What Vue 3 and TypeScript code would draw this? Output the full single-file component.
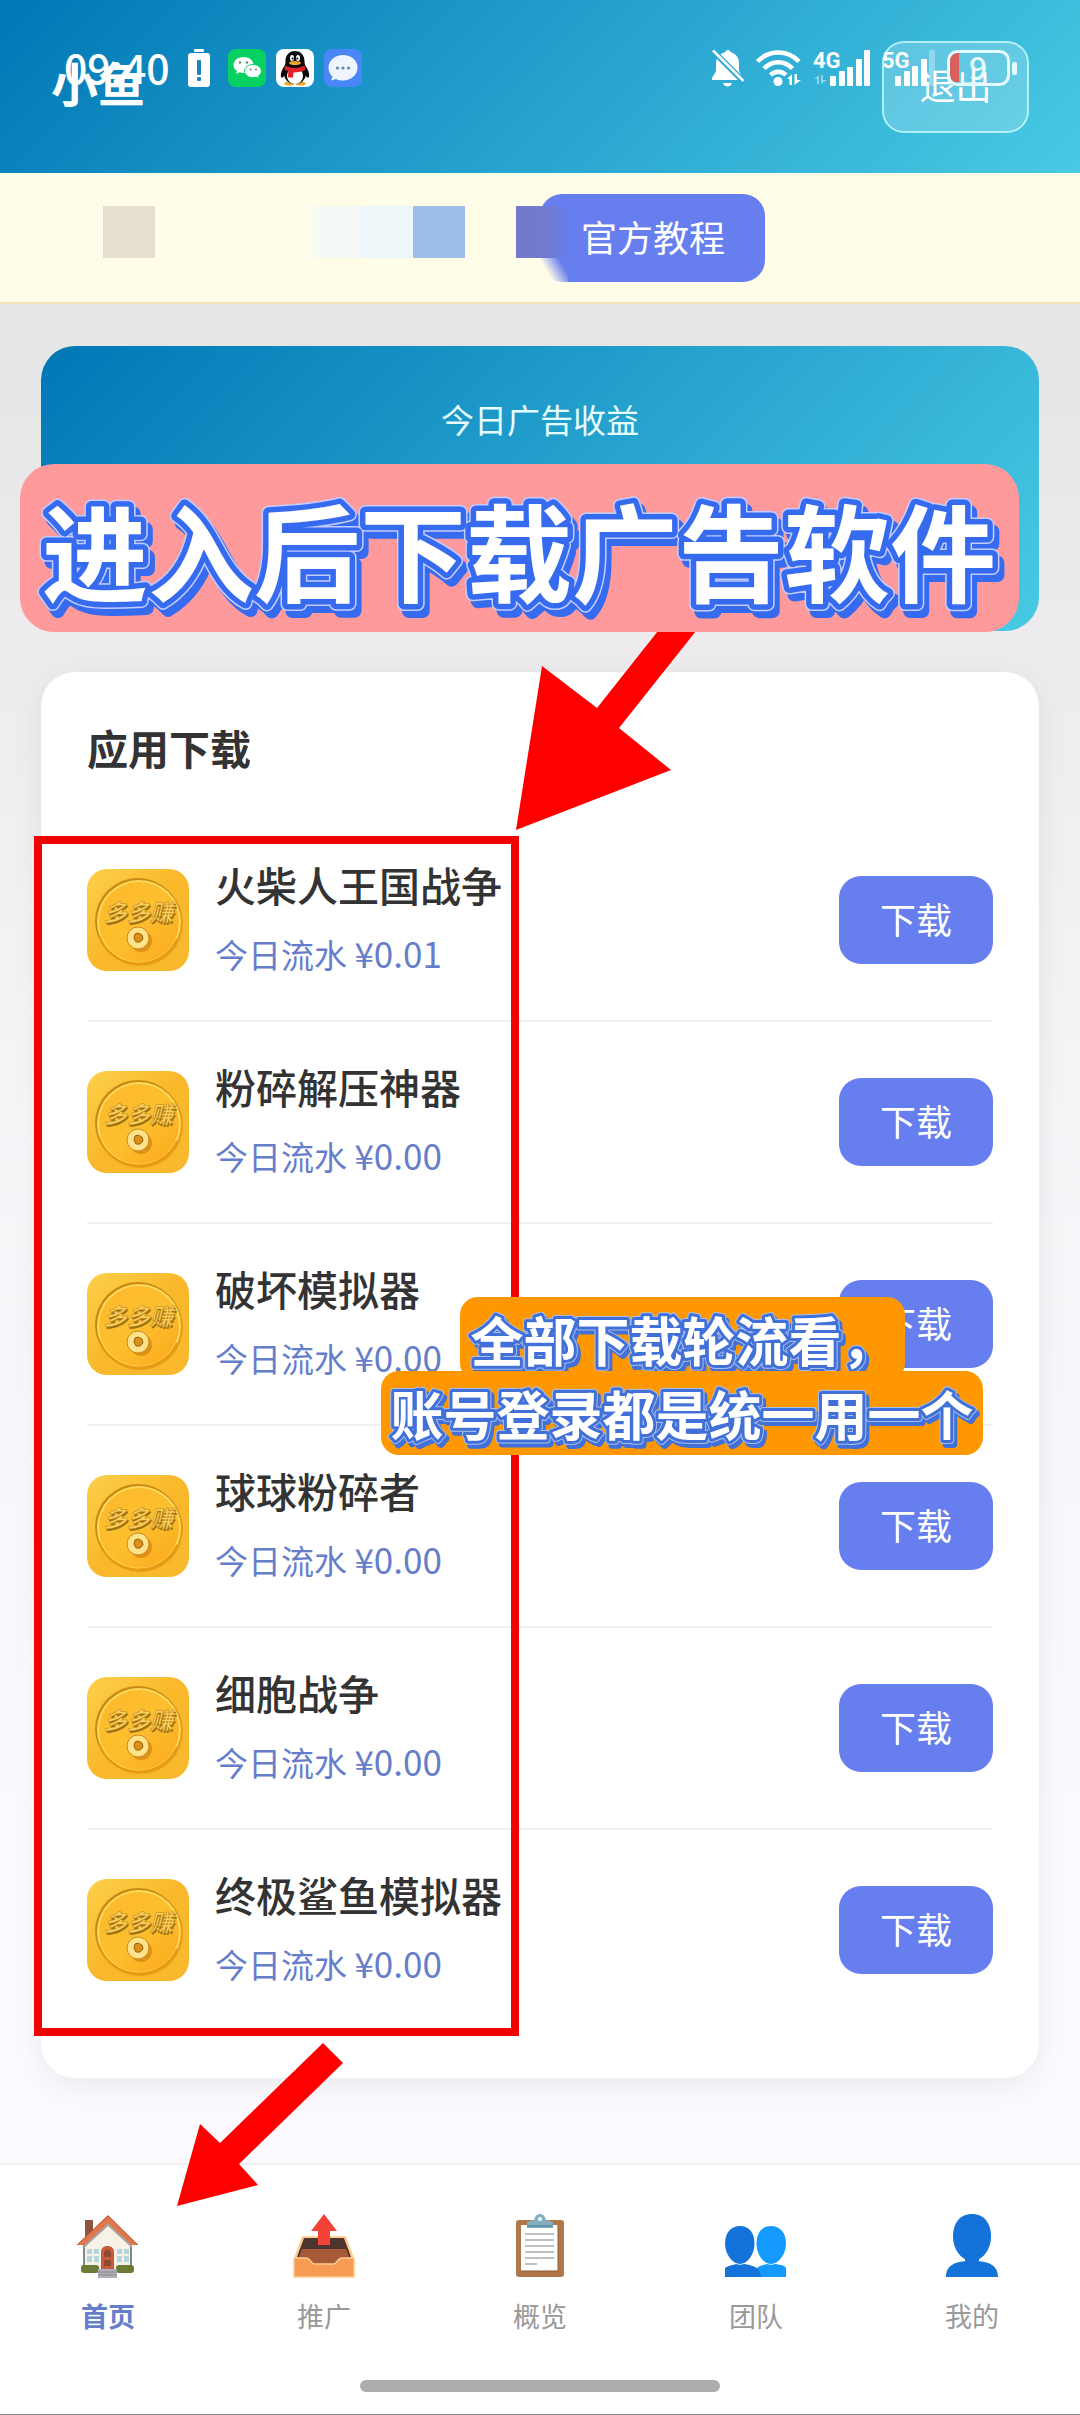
<script setup lang="ts">
import { ref } from 'vue'

interface AppEntry {
  name: string
  income: string
}

interface Tab {
  id: string
  label: string
}

interface Tip {
  id: string
  text: string
  width: number
}

const apps: AppEntry[] = [
  { name: '火柴人王国战争', income: '0.01' },
  { name: '粉碎解压神器', income: '0.00' },
  { name: '破坏模拟器', income: '0.00' },
  { name: '球球粉碎者', income: '0.00' },
  { name: '细胞战争', income: '0.00' },
  { name: '终极鲨鱼模拟器', income: '0.00' },
]

const tabs: Tab[] = [
  { id: 'home', label: '首页' },
  { id: 'promote', label: '推广' },
  { id: 'overview', label: '概览' },
  { id: 'team', label: '团队' },
  { id: 'me', label: '我的' },
]

const activeTab = ref('home')

const mosaic = ['', '', 'sand', '', '', '', 'mist', 'ice', 'sky', '', 'iris']

const tips: Tip[] = [
  { id: 'tip-rotate', text: '全部下载轮流看，', width: 445 },
  { id: 'tip-account', text: '账号登录都是统一用一个', width: 602 },
]
</script>

<template>
  <div class="page">
    <header class="topbar">
      <h1 class="brand">小鱼</h1>
      <button class="logout" type="button">退出</button>

      <div class="status">
        <div class="status-left">
          <span class="clock">09:40</span>
          <svg class="battery-alert" viewBox="0 0 24 38" width="24" height="38">
            <rect x="7" y="0" width="10" height="3" rx="1" fill="#fff" />
            <rect x="1" y="4" width="22" height="34" rx="3" fill="#fff" />
            <rect x="10" y="11" width="4" height="15" rx="1" fill="#2080b8" />
            <rect x="10" y="28" width="4" height="4" rx="1" fill="#2080b8" />
          </svg>
          <svg viewBox="0 0 38 38" width="38" height="38">
            <rect width="38" height="38" rx="8" fill="#07d160" />
            <path d="M15.500 8C9.700 8 5.500 11.600 5.500 16c0 2.500 1.300 4.600 3.400 6.100L8.200 25l3.300-1.700c1.300.4 2.600.6 4 .6 5.800 0 10-3.500 10-7.900S21.300 8 15.500 8z" fill="#fff" />
            <path d="M25 15.500c-4.700 0-8.400 2.900-8.400 6.600s3.700 6.600 8.400 6.600c1.100 0 2.200-.2 3.200-.5l2.700 1.500-.7-2.500c2-1.200 3.200-3 3.200-5.100 0-3.700-3.700-6.600-8.400-6.600z" fill="#fff" stroke="#07d160" stroke-width="1" />
            <g fill="#5a8f72"><circle cx="12" cy="13.500" r="1.200" /><circle cx="19" cy="13.500" r="1.200" /><circle cx="22.500" cy="20.500" r="1" /><circle cx="28" cy="20.500" r="1" /></g>
          </svg>
          <svg viewBox="0 0 38 38" width="38" height="38">
            <rect width="38" height="38" rx="8" fill="#fff" />
            <ellipse cx="13.500" cy="34.500" rx="5" ry="2" fill="#f5a623" />
            <ellipse cx="24.500" cy="34.500" rx="5" ry="2" fill="#f5a623" />
            <path d="M19 2c-6 0-9.500 4.500-9.500 10 0 2-.2 3.200-1.200 5.300C6 20.500 4.200 24.500 5 28c.6 1.500 2.500 0 3.200-1.300C9.500 32 14 35 19 35s9.500-3 10.800-8.300C30.500 28 32.400 29.500 33 28c.8-3.500-1-7.500-3.300-10.700-1-2.100-1.200-3.300-1.200-5.300C28.500 6.500 25 2 19 2z" fill="#0b0b0b" />
            <ellipse cx="19" cy="27" rx="8" ry="8" fill="#fff" />
            <ellipse cx="16" cy="9" rx="2" ry="3" fill="#fff" />
            <ellipse cx="22" cy="9" rx="2" ry="3" fill="#fff" />
            <circle cx="16.600" cy="9.500" r="1" /><circle cx="21.400" cy="9.500" r="1" />
            <ellipse cx="19" cy="14" rx="6" ry="2" fill="#f5a623" />
            <path d="M9.500 16.500c5.500 3.200 13.500 3.200 19 0l1 4.300c-3.500 2-7.500 2.700-12 2.700l-.5 5h-5l.3-6.500c-1.500-.4-2.700-1-3.800-1.600z" fill="#e3202c" />
          </svg>
          <svg viewBox="0 0 38 38" width="38" height="38">
            <rect width="38" height="38" rx="8" fill="#4a86f5" />
            <path d="M19 6C11 6 4.500 11.500 4.500 18.500c0 4 1.500 7 4 9.300L7 31.500l5-1.500c2 1 4.500 1.500 7 1.500 8 0 14.500-5.500 14.500-13S27 6 19 6z" fill="#eef5ff" />
            <g fill="#6d86a8"><circle cx="13.500" cy="19" r="1.600" /><circle cx="19" cy="19" r="1.600" /><circle cx="24.500" cy="19" r="1.600" /></g>
          </svg>
        </div>

        <div class="status-right">
          <svg viewBox="0 0 34 38" width="34" height="38">
            <path d="M17 1c1.600 0 2.600 1 2.600 2.300 5.200 1.300 8.400 5.300 8.400 10.700v7c0 3 4 6.500 4 8.500V31H1v-1.500C1 27.500 5 24 5 21v-7C5 8.600 9 4.600 14.400 3.300 14.400 2 15.400 1 17 1z" fill="#fff" />
            <path d="M12 34h9c-.6 2-2.200 3.500-4.500 3.500S12.600 36 12 34z" fill="#fff" />
            <path d="M0 0l34 34" stroke="#2ba8d6" stroke-width="6" />
            <path d="M2 1.500L32.500 32" stroke="#fff" stroke-width="2.500" />
          </svg>
          <svg viewBox="0 0 46 38" width="46" height="38">
            <g fill="none" stroke="#fff" stroke-width="4.500">
              <path d="M1.500 12.500c11.500-12 30-12 41.500 0" />
              <path d="M8 19.500c8-8.500 20.500-8.500 28.500 0" />
              <path d="M14.500 26c4.500-4.500 11-4.500 15.500 0" />
            </g>
            <circle cx="22" cy="32.500" r="4.500" fill="#fff" />
            <path d="M36 25v11h-2.500v-6H31zM38.500 36V25H41v6h4z" fill="#fff" />
          </svg>
          <svg viewBox="0 0 58 38" width="58" height="38">
            <text class="net" x="0" y="19">4G</text>
            <path d="M6 26v9H4v-5H1zM8 35v-9h2v5h4z" fill="#8fd3ee" />
            <g fill="#fff">
              <rect x="17" y="27" width="6" height="10" rx="1" />
              <rect x="26" y="22" width="6" height="15" rx="1" />
              <rect x="34" y="18" width="6" height="19" rx="1" />
              <rect x="43" y="10" width="6" height="27" rx="1" />
              <rect x="51" y="1" width="6" height="36" rx="1" />
            </g>
          </svg>
          <svg viewBox="0 0 54 38" width="54" height="38">
            <text class="net" x="0" y="19">5G</text>
            <g fill="#fff">
              <rect x="13" y="27" width="6" height="10" rx="1" />
              <rect x="22" y="22" width="6" height="15" rx="1" />
              <rect x="30" y="17" width="6" height="20" rx="1" />
              <rect x="39" y="10" width="6" height="27" rx="1" />
              <rect x="47" y="1" width="6" height="36" rx="1" opacity="0.3" />
            </g>
          </svg>
          <svg viewBox="0 0 70 38" width="70" height="38">
            <path d="M12 4h-2C5.500 4 3 6.500 3 11v15c0 4.500 2.500 7 7 7h2z" fill="#d9605e" />
            <rect x="1.500" y="2.500" width="60" height="33" rx="9" fill="none" stroke="#e6fbff" stroke-width="3" />
            <rect x="65" y="13" width="5" height="13" rx="2" fill="#e6fbff" />
            <text class="level" x="22" y="31">9</text>
          </svg>
        </div>
      </div>
    </header>

    <section class="notice">
      <div class="mosaic" aria-hidden="true">
        <span v-for="(tone, i) in mosaic" :key="i" class="cell" :class="tone"></span>
      </div>
      <button class="tutorial" type="button">官方教程</button>
    </section>

    <main class="content">
      <section class="income-card">
        <p class="income-label">今日广告收益</p>
      </section>

      <section class="downloads">
        <h2 class="downloads-title">应用下载</h2>
        <ul class="app-list">
          <li v-for="app in apps" :key="app.name" class="app-row">
            <svg class="coin" viewBox="0 0 102 102" width="102" height="102">
              <rect width="102" height="102" rx="20" fill="url(#coin-bg)" />
              <circle cx="53" cy="54" r="43" fill="#dc920f" opacity="0.7" />
              <circle cx="51" cy="52" r="43" fill="#c98a14" />
              <circle cx="52" cy="53" r="42" fill="#ffd95a" />
              <circle cx="52" cy="53" r="40" fill="url(#coin-face)" />
              <path d="M12 66a42 42 0 0 0 78 4" fill="none" stroke="#e99a12" stroke-width="2" />
              <text class="coin-text shade" x="18" y="54">多多赚</text>
              <text class="coin-text" x="17" y="52">多多赚</text>
              <circle cx="54" cy="72" r="11" fill="#c9780c" opacity="0.6" />
              <circle cx="51" cy="69" r="11" fill="#ffe28a" stroke="#c98a1c" stroke-width="1" />
              <path d="M51 64l4 2 1 4-3 3h-4l-2-4 1-4z" fill="#dc9018" stroke="#94600c" stroke-width="1" />
            </svg>
            <div class="app-info">
              <h3 class="app-name">{{ app.name }}</h3>
              <p class="app-income">今日流水 <span class="amount">¥{{ app.income }}</span></p>
            </div>
            <button class="download" type="button">下载</button>
          </li>
        </ul>
      </section>
    </main>

    <nav class="tabbar">
      <div class="tabs">
        <a
          v-for="tab in tabs"
          :key="tab.id"
          href="#"
          class="tab"
          :class="{ active: tab.id === activeTab }"
          @click.prevent="activeTab = tab.id"
        >
          <svg v-if="tab.id === 'home'" viewBox="0 0 64 64" width="64" height="64">
            <rect x="9" y="6" width="8" height="20" fill="#8d5540" />
            <path d="M8 30L32 8l24 22v28H8z" fill="#f7f1e6" />
            <path d="M8 31v25M55 31v25" stroke="#5c6360" stroke-width="1.500" />
            <path d="M8 34L32 12l24 22v-6L32 5 8 28z" fill="#a9a299" />
            <path d="M32 1L1 31h7L32 9l24 22h6z" fill="#e0764a" />
            <path d="M1 31L32 2l30 29" fill="none" stroke="#b85c3c" stroke-width="1" />
            <g fill="#b4d6dc"><path d="M11 35h5v5h-5zM18 35h5v5h-5zM11 42h5v6h-5zM18 42h5v6h-5zM41 35h5v5h-5zM48 35h5v5h-5zM41 42h5v6h-5zM48 42h5v6h-5z" /></g>
            <path d="M25 55V38c0-4 3-6 6.500-6s6.500 2 6.500 6v17z" fill="#c65c3c" />
            <path d="M28 43v-4c0-2 1.500-3 3.500-3s3.500 1 3.500 3v4zM28 46h7v6h-7z" fill="#8f4632" />
            <rect x="5" y="51" width="18" height="8" rx="3" fill="#6c7c34" />
            <rect x="40" y="51" width="18" height="8" rx="3" fill="#6c7c34" />
            <path d="M22 55h19v9H22z" fill="#b0b0b8" />
            <path d="M22 58h19M22 61h19" stroke="#85858c" stroke-width="1" />
          </svg>
          <svg v-else-if="tab.id === 'promote'" viewBox="0 0 64 64" width="64" height="64">
            <path d="M10 22h44l8 22v18H2V44z" fill="#ffcf92" />
            <path d="M12 24h40l7 19H5z" fill="#4e342e" />
            <path d="M10 35h44l4 10-10 5H16L6 45z" fill="#a65a38" />
            <path d="M2 44h12c5 0 4 6 9 6h18c5 0 4-6 9-6h12v19H2z" fill="#f79a54" stroke="#ffcb8c" stroke-width="1.500" />
            <path d="M32 0l13 17h-7v14H26V17h-7z" fill="#f44336" />
          </svg>
          <svg v-else-if="tab.id === 'overview'" viewBox="0 0 64 64" width="64" height="64">
            <rect x="8" y="6" width="48" height="57" rx="3" fill="#b0784a" />
            <rect x="13" y="11" width="37" height="46" fill="#fff" />
            <path d="M50 11v46H13" fill="none" stroke="#8a5a34" stroke-width="1" />
            <path d="M17 20h29M17 26h29M17 32h29M17 38h29M17 44h29M17 50h12" stroke="#a8adb0" stroke-width="1.500" />
            <path d="M19 14V9c0-2 6-2 7-3 1-4 3-6 6-6s5 2 6 6c1 1 7 1 7 3v5z" fill="#82aec0" />
            <circle cx="32" cy="5" r="2" fill="#fff" />
            <path d="M19 12h26" stroke="#5d92a8" stroke-width="2" />
          </svg>
          <svg v-else-if="tab.id === 'team'" viewBox="0 0 64 64" width="64" height="64">
            <g fill="#149aff">
              <path d="M47 12c-9 0-14.500 7-14.500 17.500C32.500 41 40 50 47 50s15-9 15-20.500C62 19 56 12 47 12z" />
              <path d="M30 63c0-9 4-11 13-13 3 1 5 1 8 0 6 1 11 1 11 5v8z" />
            </g>
            <g fill="#1373d9">
              <path d="M16 12C7 12 1 19 1 29.500 1 41 9 50 16 50s14.500-9 14.500-20.500C30.500 19 25 12 16 12z" />
              <path d="M1 63v-9c4-3 9-3 11-4 3 1 5 1 8 0 9 1 17 4 17 13z" />
            </g>
          </svg>
          <svg v-else viewBox="0 0 64 64" width="64" height="64">
            <path d="M32 0C20 0 13 9 13 22.500 13 36 22 47 32 47s19-11 19-24.500C51 9 44 0 32 0z" fill="#1373d9" />
            <path d="M25 43h14v5H25z" fill="#1373d9" />
            <path d="M6 63c0-12 9-15 21-16 3 1 7 1 10 0 12 1 21 4 21 16z" fill="#1373d9" />
          </svg>
          <span class="tab-label">{{ tab.label }}</span>
        </a>
      </div>
      <div class="home-indicator"></div>
    </nav>

    <div class="guide guide-frame"></div>
    <svg class="guide guide-arrow-list" viewBox="0 0 180 200" width="180" height="200">
      <path d="M143 0h38l-77 97 52 42L1 199 27 35l55 42z" fill="#fe0000" />
    </svg>
    <svg class="guide guide-arrow-home" viewBox="0 0 168 164" width="168" height="164">
      <path d="M147 0l20 20L63 121l19 21L1 163 24 81l20 19z" fill="#fe0000" />
    </svg>
    <svg class="guide guide-banner lettering" width="999" height="168">
      <use class="drop" href="#banner-text" />
      <use class="edge" href="#banner-text" />
      <g class="rim"><text id="banner-text" x="499" y="130">进入后下载广告软件</text></g>
    </svg>
    <div class="guide guide-tip">
      <svg v-for="tip in tips" :key="tip.id" class="tip-line lettering" :width="tip.width" height="84">
        <use class="drop" :href="'#' + tip.id" />
        <use class="edge" :href="'#' + tip.id" />
        <g class="rim"><text :id="tip.id" x="50%" y="65">{{ tip.text }}</text></g>
      </svg>
    </div>

    <svg class="defs" width="0" height="0" aria-hidden="true">
      <defs>
        <linearGradient id="coin-bg" x1="0" y1="0" x2="1" y2="1">
          <stop offset="0" stop-color="#fdd04c" />
          <stop offset="0.5" stop-color="#f9b82a" />
          <stop offset="1" stop-color="#f9b92e" />
        </linearGradient>
        <linearGradient id="coin-face" x1="0" y1="0" x2="1" y2="1">
          <stop offset="0" stop-color="#fcb92c" />
          <stop offset="0.5" stop-color="#fdbf2e" />
          <stop offset="1" stop-color="#fba81c" />
        </linearGradient>
      </defs>
    </svg>
  </div>
</template>

<style>
body {
  margin: 0;
}
</style>

<style scoped>
.page {
  position: relative;
  display: flex;
  flex-direction: column;
  min-height: 100vh;
  overflow: hidden;
  background: linear-gradient(180deg, #e5e5e5 300px, #edebee 640px, #f7f4f8 1100px, #fdfaff 1900px);
  color: #333;
  font-family: "Noto Sans CJK SC", "Noto Sans", sans-serif;
}

h1,
h2,
h3,
p,
ul {
  margin: 0;
  padding: 0;
}

button {
  border: 0;
  font-family: inherit;
  cursor: pointer;
}

svg {
  flex: none;
  overflow: visible;
}

.topbar {
  position: relative;
  display: flex;
  align-items: center;
  justify-content: space-between;
  height: 173px;
  padding: 0 51px;
  box-sizing: border-box;
  background: linear-gradient(135deg, #0077b6, #48cae4);
  color: #fff;
}

.brand {
  padding-bottom: 10px;
  font-size: 47px;
  line-height: 64px;
  font-weight: 700;
}

.logout {
  width: 147px;
  height: 92px;
  padding: 0 0 6px;
  border: 2px solid rgba(214, 255, 255, 0.7);
  border-radius: 22px;
  background: rgba(255, 255, 255, 0.2);
  color: #fff;
  font-size: 36px;
}

.status {
  position: absolute;
  inset: 49px 63px auto 64px;
  display: flex;
  justify-content: space-between;
}

.status-left,
.status-right {
  display: flex;
  align-items: center;
  height: 38px;
}

.status-left {
  gap: 10px;
}

.status-right {
  gap: 11px;
}

.clock {
  padding-bottom: 5px;
  font-size: 41px;
  line-height: 38px;
  font-weight: 500;
}

.battery-alert {
  margin: 0 7px;
}

.net {
  fill: #fff;
  font-size: 22px;
  font-weight: 700;
  font-family: "Roboto", sans-serif;
}

.level {
  fill: #e6fbff;
  font-size: 32px;
  font-weight: 500;
}

.notice {
  display: flex;
  align-items: center;
  height: 129px;
  border-bottom: 2px solid #f3e6bd;
  background: #fffce8;
}

.mosaic {
  position: relative;
  z-index: 1;
  display: flex;
  width: 568px;
  height: 52px;
  margin-top: -12px;
}

.cell {
  flex: 1;
}

.sand {
  background: #e6dfd0;
}

.mist {
  background: linear-gradient(90deg, #fafbf0, #f4f9f7 30%);
}

.ice {
  background: #edf6f8;
}

.sky {
  background: #9bbfe6;
}

.iris {
  position: relative;
  background: linear-gradient(90deg, #727bcb 50%, #6d7cdd 80%, #667eea00);
}

.iris::after {
  position: absolute;
  top: 52px;
  right: 0;
  width: 30px;
  height: 26px;
  background: linear-gradient(60deg, #fffce8 35%, #fffce800 80%);
  content: "";
}

.tutorial {
  height: 88px;
  margin-left: -28px;
  padding: 0 40px 4px 41px;
  border-radius: 22px;
  background: #667eee;
  color: #fff;
  font-size: 36px;
}

.content {
  display: flex;
  flex: 1;
  flex-direction: column;
  gap: 41px;
  padding: 42px 41px 85px;
}

.income-card {
  min-height: 285px;
  padding-top: 48px;
  border-radius: 34px;
  box-sizing: border-box;
  background: linear-gradient(135deg, #0077b6, #48cae4);
}

.income-label {
  color: #e6fdff;
  font-size: 33px;
  line-height: 50px;
  text-align: center;
}

.downloads {
  padding: 46px;
  border-radius: 34px;
  background: #fff;
  box-shadow: 0 8px 32px rgba(0, 0, 0, 0.07);
}

.downloads-title {
  margin-bottom: 44px;
  font-size: 41px;
  line-height: 58px;
  font-weight: 700;
}

.app-list {
  list-style: none;
}

.app-row {
  display: flex;
  align-items: center;
  gap: 26px;
  height: 200px;
  border-bottom: 2px solid #f1f1f1;
}

.app-row:last-child {
  border-bottom-color: transparent;
}

.coin-text {
  fill: #fbcf5a;
  stroke: #b98418;
  stroke-width: 0.500px;
  font-size: 23px;
  font-weight: 700;
  font-style: italic;
}

.coin-text.shade {
  fill: #9a7016;
  stroke: none;
}

.app-info {
  flex: 1;
  padding-bottom: 4px;
}

.app-name {
  margin-bottom: 14px;
  font-size: 41px;
  line-height: 56px;
  font-weight: 500;
}

.app-income {
  color: #667eca;
  font-size: 33px;
  line-height: 54px;
}

.amount {
  font-size: 35px;
}

.download {
  width: 154px;
  height: 88px;
  padding: 0 0 4px;
  border-radius: 22px;
  background: #667eee;
  color: #fff;
  font-size: 36px;
}

.tabbar {
  border-top: 2px solid #f0eef1;
  border-bottom: 1px solid #8a8a8a;
  background: #fff;
}

.tabs {
  display: flex;
  padding-top: 49px;
}

.tab {
  display: flex;
  flex: 1;
  flex-direction: column;
  align-items: center;
  gap: 18px;
  color: #999;
  text-decoration: none;
}

.tab-label {
  font-size: 27px;
  line-height: 40px;
}

.tab.active {
  color: #667eca;
  font-weight: 700;
}

.home-indicator {
  width: 360px;
  height: 12px;
  margin: 44px auto 22px;
  border-radius: 6px;
  background: #adadad;
}

.guide {
  position: absolute;
  pointer-events: none;
}

.guide-frame {
  top: 836px;
  left: 34px;
  width: 485px;
  height: 1200px;
  box-sizing: border-box;
  border: 8px solid #f20303;
}

.guide-arrow-list {
  top: 631px;
  left: 515px;
}

.guide-arrow-home {
  top: 2043px;
  left: 176px;
}

/* White lettering with a blue rim, a pale hairline round it and a blue drop copy below. */
.lettering {
  font-weight: 700;
  text-anchor: middle;
  white-space: nowrap;
  paint-order: stroke fill;
  stroke-linejoin: round;
}

.rim {
  fill: #fff;
  stroke: var(--rim-color);
  stroke-width: var(--rim);
}

.edge {
  fill: var(--edge-color);
  stroke: var(--edge-color);
  stroke-width: var(--edge);
}

.drop {
  fill: var(--rim-color);
  stroke: var(--rim-color);
  stroke-width: var(--edge);
  transform: translate(var(--drop-x), var(--drop-y));
}

.guide-banner {
  --rim: 11px;
  --edge: 14px;
  --rim-color: #366bef;
  --edge-color: #c3ccff;
  --drop-x: 5px;
  --drop-y: 7px;
  top: 464px;
  left: 20px;
  border-radius: 34px;
  background: #ff9a9c;
  font-size: 106px;
}

.guide-tip {
  top: 1297px;
  left: 381px;
  display: flex;
  flex-direction: column;
  align-items: center;
}

.tip-line {
  --rim: 6px;
  --edge: 8px;
  --rim-color: #4070d8;
  --edge-color: #a9bdea;
  --drop-x: 3px;
  --drop-y: 4px;
  border-radius: 18px;
  background: #ff9800;
  font-size: 53px;
}

.tip-line + .tip-line {
  margin-top: -10px;
}

.defs {
  position: absolute;
}
</style>
